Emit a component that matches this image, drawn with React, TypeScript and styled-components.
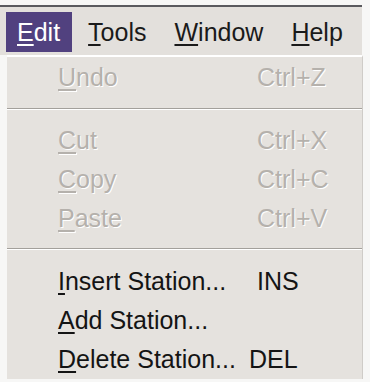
import React from "react";
import styled, { createGlobalStyle } from "styled-components";

const Global = createGlobalStyle`
  html, body { margin: 0; padding: 0; background: #f7f7f6; }
  body { font-family: "Liberation Sans", Arial, sans-serif; }
`;

const Page = styled.div`
  width: 370px;
  height: 382px;
  padding-top: 5px;
  box-sizing: border-box;
  overflow: hidden;
`;

const MenuBar = styled.div`
  width: 362px;
  height: 50px;
  box-sizing: border-box;
  border-top: 2px solid #5a5a5e;
  background: #e3e0dc;
  display: flex;
  align-items: flex-start;
  gap: 5px;
  padding: 5px 0 0 6px;
`;

const BarItem = styled.div<{ $active?: boolean }>`
  height: 40px;
  display: flex;
  align-items: center;
  padding: 0 12px 0 11px;
  font-size: 25px;
  color: ${(p) => (p.$active ? "#ffffff" : "#1a1a1a")};
  background: ${(p) => (p.$active ? "#51417f" : "transparent")};
`;

const Key = styled.span`
  text-decoration: underline;
  text-decoration-thickness: 2px;
  text-underline-offset: 3px;
`;

const Dropdown = styled.div`
  margin-left: 7px;
  width: 356px;
  box-sizing: border-box;
  border-top: 2px solid #ffffff;
  border-right: 1px solid #cfccc8;
  background: #e5e2de;
  padding-top: 1px;
  display: flex;
  flex-direction: column;
`;

const Row = styled.div<{ $disabled?: boolean }>`
  height: 39px;
  display: grid;
  grid-template-columns: 199px auto;
  align-items: center;
  padding-left: 51px;
  font-size: 25px;
  color: ${(p) => (p.$disabled ? "#b5b1ac" : "#141414")};
  text-shadow: ${(p) => (p.$disabled ? "1px 1px 0 #ffffff" : "none")};
`;

const Shortcut = styled.span<{ $nudge?: number }>`
  margin-left: ${(p) => p.$nudge ?? 0}px;
`;

const Separator = styled.div<{ $top: number; $bottom: number }>`
  padding: ${(p) => p.$top}px 0 ${(p) => p.$bottom}px;
  &::after {
    content: "";
    display: block;
    height: 1px;
    background: #a3a09b;
    border-bottom: 1px solid #ffffff;
  }
`;

type Item = { mn: string; rest: string; shortcut?: string; disabled?: boolean; nudge?: number };

const MenuRow = ({ mn, rest, shortcut, disabled, nudge }: Item) => (
  <Row $disabled={disabled}>
    <span>
      <Key>{mn}</Key>
      {rest}
    </span>
    {shortcut ? <Shortcut $nudge={nudge}>{shortcut}</Shortcut> : <span />}
  </Row>
);

export default function App() {
  return (
    <Page>
      <Global />
      <MenuBar>
        <BarItem $active>
          <span>
            <Key>E</Key>dit
          </span>
        </BarItem>
        <BarItem>
          <span>
            <Key>T</Key>ools
          </span>
        </BarItem>
        <BarItem>
          <span>
            <Key>W</Key>indow
          </span>
        </BarItem>
        <BarItem>
          <span>
            <Key>H</Key>elp
          </span>
        </BarItem>
      </MenuBar>
      <Dropdown>
        <MenuRow mn="U" rest="ndo" shortcut="Ctrl+Z" disabled />
        <Separator $top={11} $bottom={11} />
        <MenuRow mn="C" rest="ut" shortcut="Ctrl+X" disabled />
        <MenuRow mn="C" rest="opy" shortcut="Ctrl+C" disabled />
        <MenuRow mn="P" rest="aste" shortcut="Ctrl+V" disabled />
        <Separator $top={10} $bottom={12} />
        <MenuRow mn="I" rest="nsert Station..." shortcut="INS" />
        <MenuRow mn="A" rest="dd Station..." />
        <MenuRow mn="D" rest="elete Station..." shortcut="DEL" nudge={-8} />
      </Dropdown>
    </Page>
  );
}
